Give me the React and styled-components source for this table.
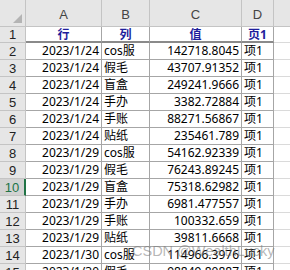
import React from 'react';
import styled, { createGlobalStyle } from 'styled-components';

const GlobalStyle = createGlobalStyle`
  body {
    margin: 0;
    background: #ffffff;
    overflow: hidden;
    font-family: "Noto Sans", "Noto Sans CJK SC", sans-serif;
  }
`;

const Page = styled.div`
  position: relative;
  width: 290px;
  height: 270px;
  overflow: hidden;
`;

const Sheet = styled.div`
  display: grid;
  grid-template-columns: 26px 76px 48px 92px 32px 40px;
  grid-template-rows: 27px 16px repeat(14, 17px);
`;

const Corner = styled.div`
  position: relative;
  box-sizing: border-box;
  background: #e6e6e6;
  border-right: 1px solid #c4c4c4;
  border-bottom: 1px solid #c4c4c4;

  &::after {
    content: '';
    position: absolute;
    right: 3px;
    bottom: 3px;
    border-left: 9px solid transparent;
    border-bottom: 9px solid #b4b4b4;
  }
`;

const ColHead = styled.div`
  box-sizing: border-box;
  background: #e6e6e6;
  border-right: 1px solid #c4c4c4;
  border-bottom: 1px solid #c4c4c4;
  display: flex;
  align-items: center;
  justify-content: center;
  padding-top: 2px;
  font-family: "Liberation Sans", sans-serif;
  font-size: 13px;
  color: #444444;
`;

const RowHead = styled.div`
  box-sizing: border-box;
  background: ${p => (p.$active ? '#d2d2d2' : '#e6e6e6')};
  border-right: ${p => (p.$active ? '2px solid #217346' : '1px solid #c4c4c4')};
  border-bottom: 1px solid #c4c4c4;
  display: flex;
  align-items: center;
  justify-content: center;
  font-family: "Liberation Sans", sans-serif;
  font-size: 13px;
  color: ${p => (p.$active ? '#217346' : '#222222')};
`;

const Cell = styled.div`
  box-sizing: border-box;
  background: #ffffff;
  border-right: 1px solid ${p => (p.$blank ? '#dadada' : '#a6a6a6')};
  border-bottom: ${p => (p.$title ? '2px solid #8a8a8a' : `1px solid ${p.$blank ? '#dadada' : '#a6a6a6'}`)};
  display: flex;
  align-items: center;
  justify-content: ${p => p.$align || 'flex-start'};
  padding: 0 2px;
  white-space: nowrap;
  overflow: ${p => (p.$title ? 'visible' : 'hidden')};
  font-size: 12px;
  line-height: ${p => (p.$title ? '13px' : '14px')};
  color: ${p => (p.$title ? '#1e1e9c' : '#000000')};
  font-weight: ${p => (p.$title ? 700 : 400)};
`;

const Watermark = styled.div`
  position: absolute;
  left: 132px;
  top: 243px;
  font-family: "Liberation Sans", sans-serif;
  font-size: 14.5px;
  color: rgba(120, 120, 120, 0.55);
  pointer-events: none;
`;

const columns = ['A', 'B', 'C', 'D', ''];
const titles = ['行', '列', '值', '页1'];

const rows = [
  ['2023/1/24', 'cos服', '142718.8045', '项1'],
  ['2023/1/24', '假毛', '43707.91352', '项1'],
  ['2023/1/24', '盲盒', '249241.9666', '项1'],
  ['2023/1/24', '手办', '3382.72884', '项1'],
  ['2023/1/24', '手账', '88271.56867', '项1'],
  ['2023/1/24', '贴纸', '235461.789', '项1'],
  ['2023/1/29', 'cos服', '54162.92339', '项1'],
  ['2023/1/29', '假毛', '76243.89245', '项1'],
  ['2023/1/29', '盲盒', '75318.62982', '项1'],
  ['2023/1/29', '手办', '6981.477557', '项1'],
  ['2023/1/29', '手账', '100332.659', '项1'],
  ['2023/1/29', '贴纸', '39811.6668', '项1'],
  ['2023/1/30', 'cos服', '114966.3976', '项1'],
  ['2023/1/30', '假毛', '98849.80887', '项1'],
];

const align = ['flex-end', 'flex-start', 'flex-end', 'flex-start'];

export default function App() {
  return (
    <Page>
      <GlobalStyle />
      <Sheet>
        <Corner />
        {columns.map((c, i) => (
          <ColHead key={i}>{c}</ColHead>
        ))}

        <RowHead>1</RowHead>
        {titles.map((t, i) => (
          <Cell key={i} $title $align="center">{t}</Cell>
        ))}
        <Cell $blank />

        {rows.map((r, i) => (
          <React.Fragment key={i}>
            <RowHead $active={i + 2 === 10}>{i + 2}</RowHead>
            {r.map((v, j) => (
              <Cell key={j} $align={align[j]}>{v}</Cell>
            ))}
            <Cell $blank />
          </React.Fragment>
        ))}
      </Sheet>
      <Watermark>CSDN @WealthLucky</Watermark>
    </Page>
  );
}
